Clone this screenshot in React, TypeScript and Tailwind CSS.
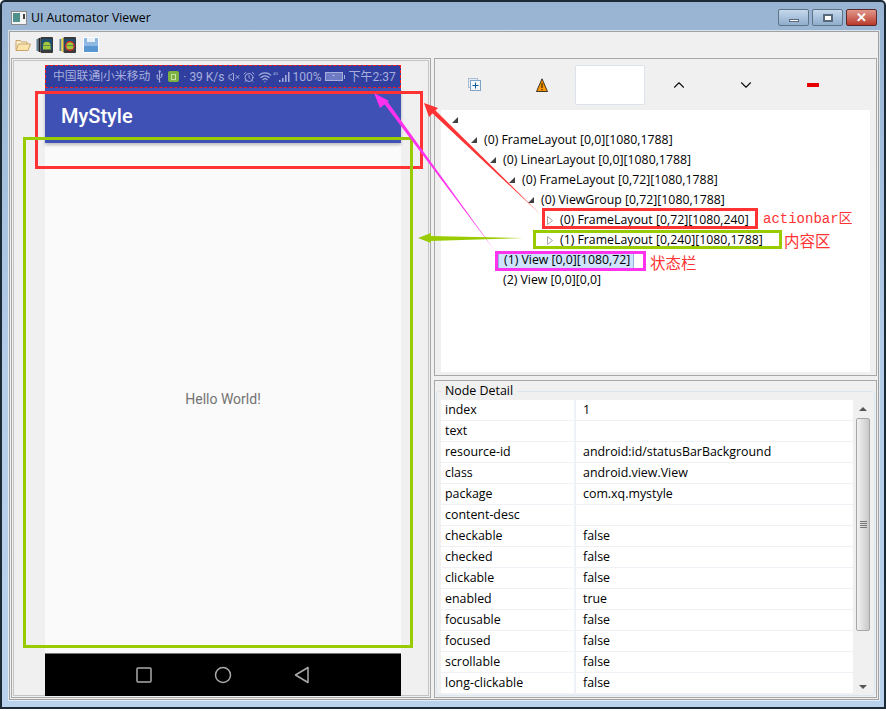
import { AlarmClock, ChevronDown, ChevronUp, Usb, VolumeX, Wifi } from 'lucide-react'

const TREE_ROWS = [
  { text: '', depth: 0, caret: 'open' },
  { text: '(0) FrameLayout [0,0][1080,1788]', depth: 1, caret: 'open' },
  { text: '(0) LinearLayout [0,0][1080,1788]', depth: 2, caret: 'open' },
  { text: '(0) FrameLayout [0,72][1080,1788]', depth: 3, caret: 'open' },
  { text: '(0) ViewGroup [0,72][1080,1788]', depth: 4, caret: 'open' },
  { text: '(0) FrameLayout [0,72][1080,240]', depth: 5, caret: 'closed' },
  { text: '(1) FrameLayout [0,240][1080,1788]', depth: 5, caret: 'closed' },
  { text: '(1) View [0,0][1080,72]', depth: 2, caret: 'none', selected: true },
  { text: '(2) View [0,0][0,0]', depth: 2, caret: 'none' },
]

const DETAILS = [
  ['index', '1'],
  ['text', ''],
  ['resource-id', 'android:id/statusBarBackground'],
  ['class', 'android.view.View'],
  ['package', 'com.xq.mystyle'],
  ['content-desc', ''],
  ['checkable', 'false'],
  ['checked', 'false'],
  ['clickable', 'false'],
  ['enabled', 'true'],
  ['focusable', 'false'],
  ['focused', 'false'],
  ['scrollable', 'false'],
  ['long-clickable', 'false'],
]

function PhoneIcon({ capture }: { capture?: boolean }) {
  return (
    <svg width="18" height="16" viewBox="0 0 18 16">
      <rect x="0.500" y="2" width="2" height="12" fill="#5b7f95" />
      <rect x="2.500" y="1" width="2" height="14" fill={capture ? '#e8d040' : '#222'} />
      <rect x="4.500" y="0" width="12.500" height="16" rx="1" fill="#3a3a3a" />
      <rect x="5.500" y="2" width="10.500" height="11" fill="#1d4f73" />
      <path d="M7 8.500a3.800 3.800 0 0 1 7.600 0zM7 9h7.600v3.500H7z" fill="#a4c639" />
      {capture && <circle cx="11" cy="9" r="4.300" fill="none" stroke="#e02020" strokeWidth="1.200" />}
    </svg>
  )
}

function ToolbarIcons() {
  return (
    <div className="flex items-center h-full pl-[5px] gap-[5px]">
      <svg width="16" height="14" viewBox="0 0 16 14">
        <path d="M1 12V2.500h4.500l1 1.500h5.500v2" fill="#fdf0d0" stroke="#c9a468" />
        <path d="M1 12.500 3.500 6H15.500l-2.500 6.500z" fill="#fbe3ac" stroke="#c9a468" />
      </svg>
      <PhoneIcon />
      <PhoneIcon capture />
      <svg width="16" height="16" viewBox="0 0 16 16" className="ml-px">
        <rect width="16" height="16" fill="#fff" />
        <rect x="1" y="1" width="14" height="14" fill="#8fb9e2" />
        <rect x="1" y="9" width="14" height="6" fill="#5a96d0" />
        <rect x="4" y="1" width="8" height="4" fill="#e6f0f9" />
      </svg>
    </div>
  )
}

function StatusBar() {
  return (
    <div className="h-[23px] shrink-0 bg-[#303f9f] border border-dashed border-[#ff1a1a] flex items-center pl-[7px] text-[#a6aedd] whitespace-nowrap font-['Roboto','Noto_Sans_CJK_SC',sans-serif]">
      <span className="text-[11.800px]">中国联通|小米移动</span>
      <Usb className="w-[11px] h-[11px] ml-[4px] -rotate-45" strokeWidth={2} />
      <span className="w-[11px] h-[11px] ml-[3px] rounded-[2px] bg-[#7cb342] flex items-center justify-center">
        <span className="w-[5px] h-[6px] border border-[#c5e1a5]" />
      </span>
      <span className="ml-[4px] text-[12px]">· 39 K/s</span>
      <VolumeX className="w-[12px] h-[12px] ml-[3px]" strokeWidth={2} />
      <AlarmClock className="w-[12px] h-[12px] ml-[3px]" strokeWidth={2} />
      <Wifi className="w-[14px] h-[14px] ml-[3px]" strokeWidth={2} />
      <svg width="19" height="12" viewBox="0 0 19 12" className="ml-px">
        <path d="M6 11h1.500V9H6zM9 11h1.500V7H9zM12 11h1.500V4H12zM15 11h1.500V1H15z" fill="#a6aedd" />
        <text x="0" y="4" fontSize="4" fill="#a6aedd">4G</text>
      </svg>
      <span className="ml-px text-[12px]">100%</span>
      <span className="ml-[3px] w-[18px] h-[9px] border border-[#a6aedd] bg-[#6d7bc4] flex items-center justify-center text-[7px] leading-none text-white">-</span>
      <span className="ml-px w-px h-[4px] bg-[#a6aedd]" />
      <span className="ml-[4px] text-[12px]">下午2:37</span>
    </div>
  )
}

function Phone() {
  return (
    <div className="w-[356px] ml-[31px] mt-[4px] flex flex-col">
      <StatusBar />
      <div className="h-[55px] shrink-0 bg-[#3f51b5] flex items-center pl-[16px] pt-[1px] text-white text-[20px] font-medium font-['Roboto',sans-serif] shadow-[0_2px_3px_rgba(0,0,0,0.25)] z-0">
        MyStyle
      </div>
      <div className="h-[510px] shrink-0 bg-[#fafafa] flex items-center justify-center pt-[2px] text-[14px] text-[#737373] font-['Roboto',sans-serif]">
        Hello World!
      </div>
      <div className="h-[43px] shrink-0 bg-black border-t border-[#777] flex items-center justify-center gap-[62px]">
        <svg width="16" height="16" viewBox="0 0 16 16" fill="none" stroke="#aaa" strokeWidth="1.500">
          <rect x="1" y="1" width="14" height="14" rx="1" />
        </svg>
        <svg width="18" height="18" viewBox="0 0 18 18" fill="none" stroke="#aaa" strokeWidth="1.500">
          <circle cx="9" cy="9" r="7.500" />
        </svg>
        <svg width="16" height="18" viewBox="0 0 16 18" fill="none" stroke="#aaa" strokeWidth="1.500" strokeLinejoin="round">
          <path d="M14 1.500v15L1.500 9z" />
        </svg>
      </div>
    </div>
  )
}

function Caret({ kind }: { kind: string }) {
  if (kind === 'open') {
    return (
      <svg width="6" height="6" viewBox="0 0 6 6" className="shrink-0">
        <path d="M6 0v6H0z" fill="#404040" />
      </svg>
    )
  }
  if (kind === 'closed') {
    return (
      <svg width="6" height="9" viewBox="0 0 6 9" className="shrink-0">
        <path d="M.5.500 5.500 4.500.5 8.500z" fill="#fff" stroke="#a6a6a6" />
      </svg>
    )
  }
  return <span className="w-[6px] shrink-0" />
}

function TreePanel() {
  return (
    <div className="h-[318px] shrink-0 border border-[#a8a8a8] flex flex-col">
      <div className="h-[51px] shrink-0 pl-[6px] flex items-center">
        <div className="w-[67px] flex justify-center">
          <svg width="13" height="13" viewBox="0 0 13 13" fill="none">
            <rect x="0.500" y="0.500" width="9" height="9" fill="#e8eef5" stroke="#a9bdd4" />
            <rect x="2.500" y="2.500" width="10" height="10" fill="#f4f8fc" stroke="#7fa3c7" />
            <path d="M7.500 4.500v6M4.500 7.500h6" stroke="#0f5a96" />
          </svg>
        </div>
        <div className="w-[67px] flex justify-center">
          <svg width="12" height="14" viewBox="0 0 12 14">
            <path d="M6 .8 11.500 13.500H.5z" fill="#fb9600" stroke="#111" strokeWidth="0.800" />
            <path d="M5.500 5h1v5h-1zM5.500 11h1v1.300h-1z" fill="#111" />
          </svg>
        </div>
        <div className="w-[70px] h-[40px] bg-white border border-[#dde3ea] rounded-[2px]" />
        <div className="w-[67px] flex justify-center">
          <ChevronUp className="w-[18px] h-[18px] text-[#111]" strokeWidth={1.500} />
        </div>
        <div className="w-[67px] flex justify-center">
          <ChevronDown className="w-[18px] h-[18px] text-[#111]" strokeWidth={1.500} />
        </div>
        <div className="w-[67px] flex justify-center">
          <span className="w-[12px] h-[4px] bg-[#e60000]" />
        </div>
      </div>
      <div className="mx-[6px] w-[429px] h-[262px] bg-white text-[12.300px] text-black">
        {TREE_ROWS.map((row) => (
          <div
            key={row.text}
            className="h-[20px] flex items-center gap-[7px]"
            style={{ paddingLeft: 11 + row.depth * 19 }}
          >
            <Caret kind={row.caret} />
            {row.selected ? (
              <span className="-ml-[5px] pl-[5px] pr-[3px] h-[15px] leading-[14px] bg-[#cde4fc] border-l border-r border-[#8fb4dc]">{row.text}</span>
            ) : (
              <span>{row.text}</span>
            )}
          </div>
        ))}
      </div>
    </div>
  )
}

function Scrollbar() {
  return (
    <div className="w-[14px] h-[294px] ml-[3px] bg-[#f0f0f0] flex flex-col">
      <div className="h-[18px] shrink-0 flex items-center justify-center">
        <span className="w-0 h-0 border-x-[4px] border-x-transparent border-b-[4px] border-b-[#555]" />
      </div>
      <div className="h-[213px] shrink-0 rounded-[2px] border border-[#a6a6a6] bg-linear-to-r from-[#f2f2f2] to-[#c9c9c9] flex flex-col items-center justify-center gap-px">
        <span className="w-[7px] h-px bg-[#777]" />
        <span className="w-[7px] h-px bg-[#777]" />
        <span className="w-[7px] h-px bg-[#777]" />
        <span className="w-[7px] h-px bg-[#777]" />
      </div>
      <div className="flex-1 flex items-end justify-center pb-[5px]">
        <span className="w-0 h-0 border-x-[4px] border-x-transparent border-t-[4px] border-t-[#555]" />
      </div>
    </div>
  )
}

function NodeDetail() {
  return (
    <div className="flex-1 border border-[#a8a8a8] pt-[2px] px-px">
      <fieldset className="h-[313px] border border-[#dce6f0] rounded-[3px] px-[4px] text-[12.400px] text-black">
        <legend className="ml-0 px-[4px] h-[17px] leading-[16px]">Node Detail</legend>
        <div className="flex">
          <div className="w-[412px] bg-white">
            {DETAILS.map(([name, value]) => (
              <div key={name} className="h-[21px] flex items-center border-b border-[#eef1f5]">
                <div className="w-[135px] h-full pl-[4px] leading-[20px] border-r-2 border-[#eef1f5]">{name}</div>
                <div className="pl-[7px] leading-[20px]">{value}</div>
              </div>
            ))}
          </div>
          <Scrollbar />
        </div>
      </fieldset>
    </div>
  )
}

function Annotations() {
  return (
    <>
      {/* markup boxes and arrows drawn over the screenshot */}
      <div className="absolute left-[35px] top-[91px] w-[388px] h-[78px] border-[3px] border-[#ff3333]" />
      <div className="absolute left-[23px] top-[137px] w-[390px] h-[511px] border-[3px] border-[#99cc00]" />
      <div className="absolute left-[542px] top-[208px] w-[216px] h-[21px] border-[3px] border-[#ff3333]" />
      <div className="absolute left-[533px] top-[230px] w-[249px] h-[19px] border-[3px] border-[#99cc00]" />
      <div className="absolute left-[495px] top-[251px] w-[151px] h-[20px] border-[3px] border-[#ff33ee]" />
      <svg className="absolute left-0 top-0 pointer-events-none" width="886" height="711" viewBox="0 0 886 711">
        <path d="M541 215 431 112 434 109z" fill="#ff3333" />
        <path d="M424 103 438 108 429 117z" fill="#ff3333" />
        <path d="M495 251 384 103.500 387 101z" fill="#ff33ee" />
        <path d="M374 93 389 101 380 108z" fill="#ff33ee" />
        <path d="M524 238 430 236 430 241z" fill="#99cc00" />
        <path d="M418 238 431 233 431 243z" fill="#99cc00" />
      </svg>
      <span className="absolute left-[763px] top-[210px] text-[14px] leading-[18px] text-[#ff3333] font-['Liberation_Mono','Noto_Sans_CJK_SC',monospace]">actionbar区</span>
      <span className="absolute left-[784px] top-[231px] text-[15.500px] leading-[18px] text-[#ff3333] font-['Noto_Sans_CJK_SC',sans-serif]">内容区</span>
      <span className="absolute left-[650px] top-[253px] text-[15.500px] leading-[18px] text-[#ff3333] font-['Noto_Sans_CJK_SC',sans-serif]">状态栏</span>
    </>
  )
}

export default function App() {
  return (
    <div className="relative w-[886px] h-[711px] bg-white font-['Open_Sans','Noto_Sans',sans-serif] overflow-hidden">
      <div className="w-[886px] h-[709px] border-t-2 border-x-2 border-b-2 border-[#1c2a36] rounded-t-[5px] bg-linear-to-b from-[#98b4d2] via-[#b3cde8] to-[#b9d3ed] flex flex-col">
        {/* title bar */}
        <div className="h-[29px] shrink-0 flex items-center pl-[9px] pr-[7px]">
          <svg width="16" height="14" viewBox="0 0 16 14" className="mt-[2px]">
            <rect x="0.500" y="0.500" width="15" height="13" fill="#f4f4f4" stroke="#8a8a8a" />
            <rect x="2" y="2" width="7" height="9" fill="#4f8f8c" />
            <rect x="12" y="3" width="2" height="5" fill="#444" />
          </svg>
          <span className="ml-[4px] mt-[3px] text-[12.300px] text-black">UI Automator Viewer</span>
          <div className="ml-auto flex gap-[3px] mt-[2px]">
            <div className="w-[31px] h-[17px] rounded-[2px] border border-[#5f7387] bg-linear-to-b from-[#c5d8ec] to-[#8fadcc] flex items-end justify-center pb-[3px]">
              <span className="w-[10px] h-[3px] bg-white border border-[#59687a]" />
            </div>
            <div className="w-[31px] h-[17px] rounded-[2px] border border-[#5f7387] bg-linear-to-b from-[#c5d8ec] to-[#8fadcc] flex items-center justify-center">
              <span className="w-[10px] h-[8px] bg-white border-[2px] border-[#59687a]" />
            </div>
            <div className="w-[31px] h-[17px] rounded-[2px] border border-[#5a2a2a] bg-linear-to-b from-[#e0968c] to-[#b8382a] flex items-center justify-center text-white text-[13px] leading-none font-bold">
              ✕
            </div>
          </div>
        </div>

        {/* client area */}
        <div className="ml-[7px] w-[870px] h-[669px] shrink-0 bg-[#f0f0f0] border-t border-x border-b border-[#a0a0a0] ring-1 ring-white/60 flex flex-col">
          <div className="h-[26px] shrink-0">
            <ToolbarIcons />
          </div>
          <div className="flex-1 flex gap-[3px] px-px pb-px">
            <div className="w-[420px] h-[640px] border border-[#a8a8a8] p-px">
              <div className="h-full border border-[#c4c4c4]">
                <Phone />
              </div>
            </div>
            <div className="w-[443px] flex flex-col gap-[4px]">
              <TreePanel />
              <NodeDetail />
            </div>
          </div>
        </div>
      </div>
      <Annotations />
    </div>
  )
}
